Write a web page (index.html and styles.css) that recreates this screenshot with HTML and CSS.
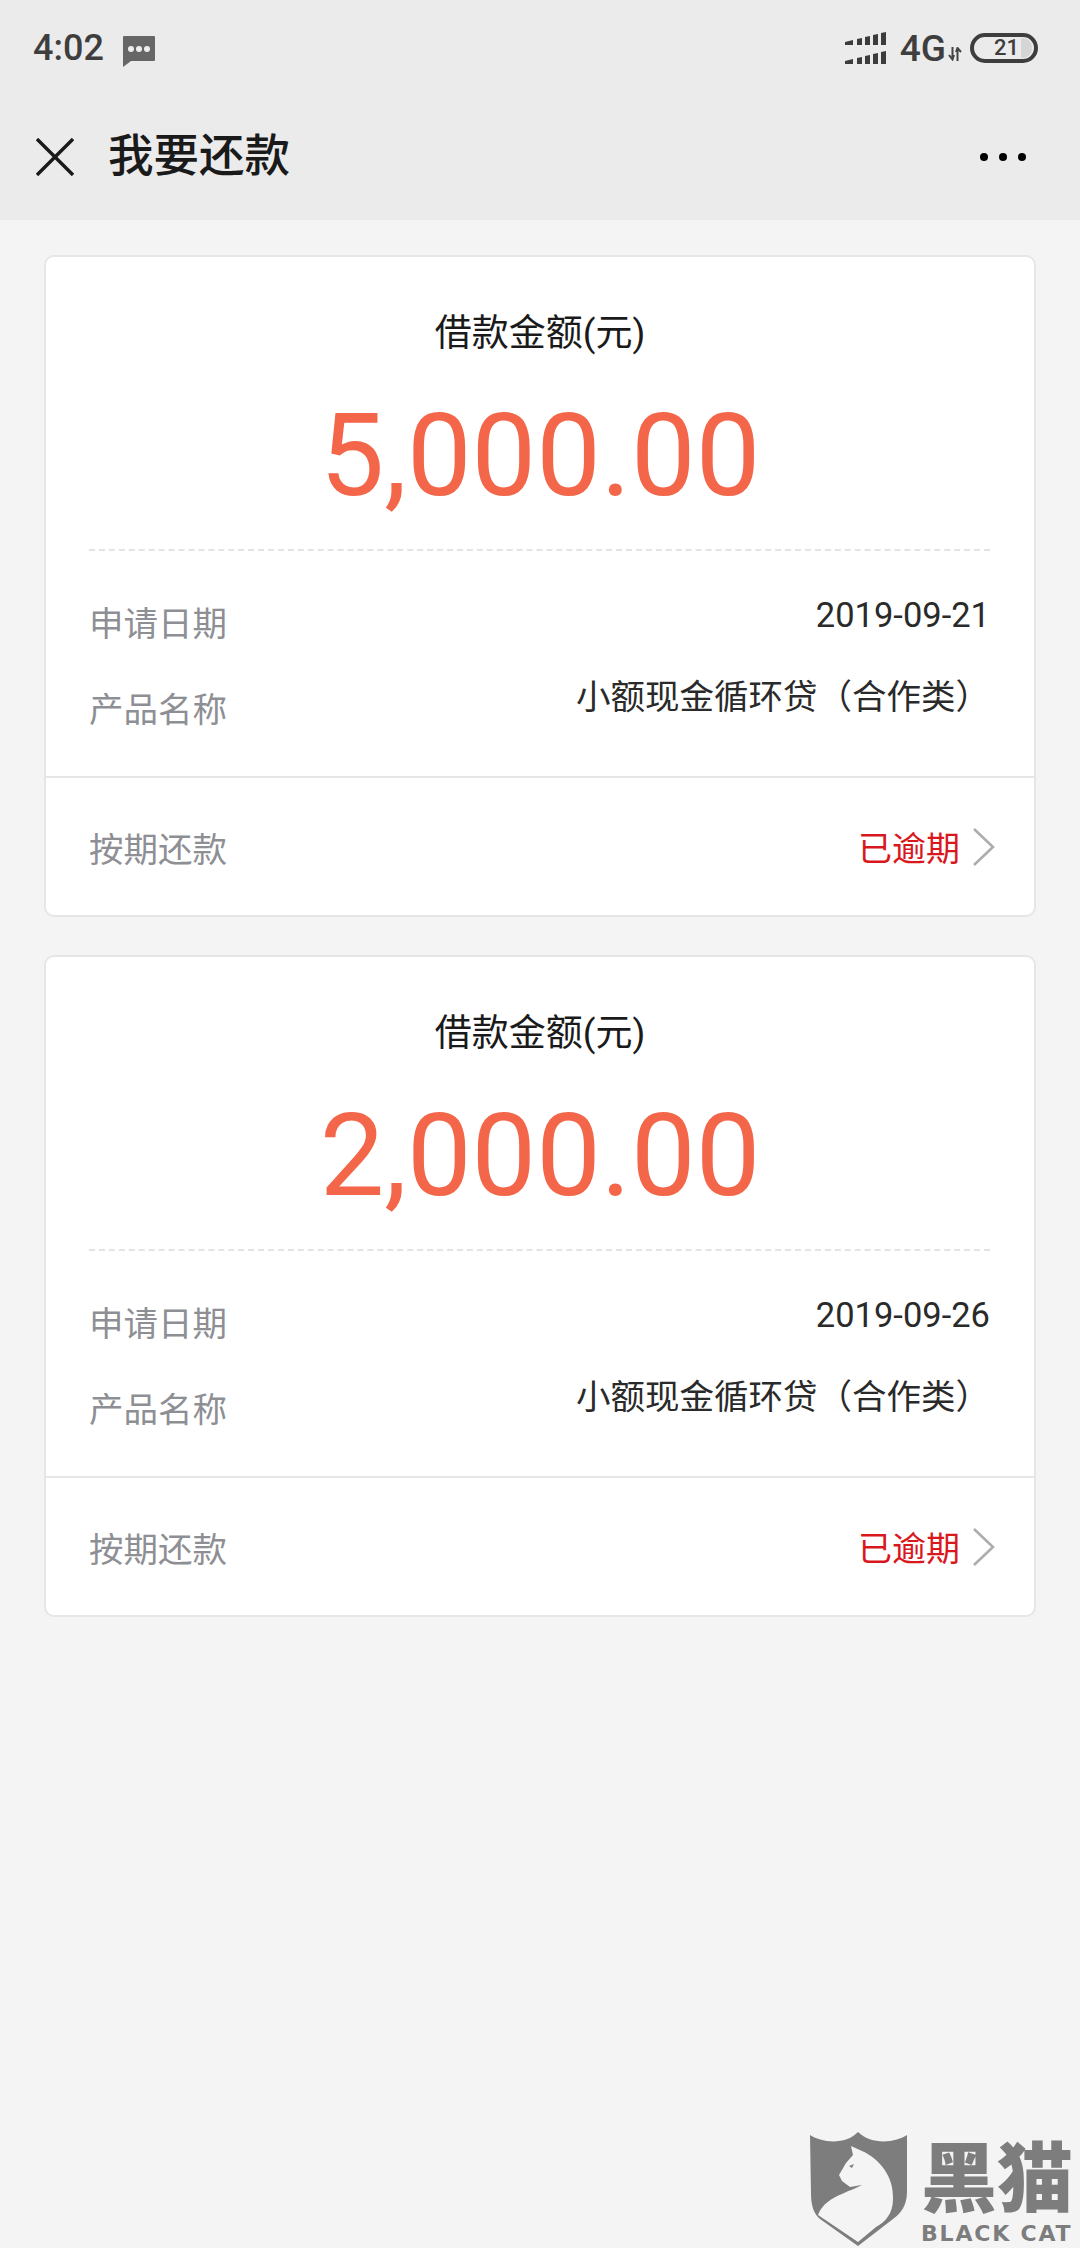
FILE: index.html
```html
<!DOCTYPE html>
<html lang="zh">
<head>
<meta charset="utf-8">
<title>我要还款</title>
<link rel="stylesheet" href="styles.css">
</head>
<body>
<div class="page">
  <header class="head">
    <div class="status">
      <div class="status-left">
        <span class="time">4:02</span>
        <svg class="msg" width="34" height="32" viewBox="0 0 34 32"><path d="M1 2a1 1 0 0 1 1-1h30a1 1 0 0 1 1 1v23a1 1 0 0 1-1 1H9l-8 6z" fill="#666"/><circle cx="9" cy="14" r="3" fill="#eee"/><circle cx="17" cy="14" r="3" fill="#eee"/><circle cx="25" cy="14" r="3" fill="#eee"/></svg>
      </div>
      <div class="status-right">
        <svg class="signal" width="42" height="32" viewBox="0 0 42 32"><g fill="#3c3c3c"><path d="M0 10l8-2v5H0zM12 7l5-1v7h-5zM20 5l5-1v9h-5zM28 3l5-1v11h-5zM36 1l5-1v13h-5z"/><path d="M0 29l8-2v5H0zM12 26l5-1v7h-5zM20 24l5-1v9h-5zM28 22l5-1v11h-5zM36 20l5-1v13h-5z"/></g></svg>
        <span class="net">4G</span>
        <svg class="updown" width="14" height="14" viewBox="0 0 14 14"><path d="M4.500 0v10M1 8l3.500 4.500L6 8M9.500 14V3M8 5l1.500-4L13 5" fill="none" stroke="#444" stroke-width="2"/></svg>
        <span class="battery"><span class="batt-num">21</span><span class="batt-fill"></span></span>
      </div>
    </div>
    <nav class="nav">
      <div class="nav-left">
        <svg class="close" width="38" height="38" viewBox="0 0 38 38"><path d="M1 1l36 36M37 1L1 37" fill="none" stroke="#1a1a1a" stroke-width="3.400"/></svg>
        <h1 class="title">我要还款</h1>
      </div>
      <div class="more"><i class="dot"></i><i class="dot"></i><i class="dot"></i></div>
    </nav>
  </header>

  <main class="list">
    <section class="card">
      <div class="summary">
        <div class="caption">借款金额(元)</div>
        <div class="amount">5,000.00</div>
      </div>
      <div class="details">
        <div class="row">
          <span class="label">申请日期</span>
          <span class="value value-date">2019-09-21</span>
        </div>
        <div class="row">
          <span class="label">产品名称</span>
          <span class="value value-name">小额现金循环贷（合作类）</span>
        </div>
      </div>
      <div class="foot">
        <span class="label label-foot">按期还款</span>
        <span class="state">已逾期
          <svg class="chev" width="24" height="40" viewBox="0 0 24 40"><path d="M2 2l19 18L2 38" fill="none" stroke="#adadad" stroke-width="2.600"/></svg>
        </span>
      </div>
    </section>

    <section class="card">
      <div class="summary">
        <div class="caption">借款金额(元)</div>
        <div class="amount">2,000.00</div>
      </div>
      <div class="details">
        <div class="row">
          <span class="label">申请日期</span>
          <span class="value value-date">2019-09-26</span>
        </div>
        <div class="row">
          <span class="label">产品名称</span>
          <span class="value value-name">小额现金循环贷（合作类）</span>
        </div>
      </div>
      <div class="foot">
        <span class="label label-foot">按期还款</span>
        <span class="state">已逾期
          <svg class="chev" width="24" height="40" viewBox="0 0 24 40"><path d="M2 2l19 18L2 38" fill="none" stroke="#adadad" stroke-width="2.600"/></svg>
        </span>
      </div>
    </section>
  </main>

  <div class="mark">
    <svg class="shield" width="98" height="115" viewBox="0 0 98 115">
      <path d="M0 3C10 10 35 14 48 0 62 14 87 10 97 3V60C97 74 90 82 83 87L48 114 10 87C4 82 1 74 1 62z" fill="#7d7d7d"/>
      <path d="M41 14L52 19C70 27 84 45 83 67 83 82 75 90 66 95L48 110 8 83C12 72 22 66 32 62 40 58 47 56 52 53L40 55 32 49 29 43 36 31 43 23z" fill="#f4f4f4"/>
      <path d="M39 34l5-2-2 4z" fill="#7d7d7d"/>
    </svg>
    <div class="mark-text">
      <div class="mark-cn">黑猫</div>
      <div class="mark-en">BLACK CAT</div>
    </div>
  </div>
</div>
</body>
</html>
```

FILE: styles.css
```css
* { box-sizing: border-box; }
html, body { margin: 0; padding: 0; }
body {
  font-family: Roboto, "Noto Sans CJK SC", sans-serif;
  background: #f4f4f5;
  color: #1a1a1a;
}
.page {
  position: relative;
  width: 1080px;
  height: 2248px;
  overflow: hidden;
}

/* header */
.head { background: #ebebeb; height: 220px; }
.status {
  height: 96px;
  padding: 0 42px 0 33px;
  display: flex;
  justify-content: space-between;
  align-items: center;
}
.status-left { display: flex; align-items: center; gap: 18px; }
.time { font-size: 36px; font-weight: 500; color: #3e3e3e; line-height: 1; }
.msg { margin-top: 6px; }
.status-right { display: flex; align-items: center; }
.signal { margin-right: 13px; }
.net { font-size: 37px; font-weight: 500; color: #3e3e3e; line-height: 1; }
.updown { margin: 12px 8px 0 2px; }
.battery {
  width: 68px;
  height: 30px;
  border: 4px solid #3e3e3e;
  border-radius: 15px;
  display: flex;
  align-items: center;
  justify-content: flex-end;
  padding-right: 2px;
  gap: 2px;
}
.batt-num { font-size: 22px; font-weight: 500; color: #3e3e3e; line-height: 1; }
.batt-fill { width: 11px; height: 20px; background: #d6d6d6; border-radius: 0 9px 9px 0; }
.nav {
  height: 124px;
  padding: 0 36px 2px 36px;
  display: flex;
  justify-content: space-between;
  align-items: center;
}
.nav-left { display: flex; align-items: center; gap: 34px; }
.close { display: block; }
.title { margin: 0; font-size: 45.500px; font-weight: 500; line-height: 1; color: #1a1a1a; }
.more { display: flex; gap: 11px; padding-right: 18px; }
.dot { width: 8px; height: 8px; border-radius: 50%; background: #000; display: block; }

/* cards */
.list {
  padding: 35px 44px 0;
  display: flex;
  flex-direction: column;
  gap: 38px;
}
.card {
  height: 662px;
  background: #fff;
  border: 2px solid #e6e6e6;
  border-radius: 10px;
  display: flex;
  flex-direction: column;
}
.summary { height: 292px; padding-top: 52px; text-align: center; }
.caption { font-size: 37px; line-height: 50px; }
.amount {
  font-size: 115px;
  line-height: 130px;
  margin-top: 32px;
  color: #f4664a;
}
.details {
  height: 227px;
  margin: 0 44px 0 43px;
  padding-top: 46px;
  border-top: 2px dashed #e4e4e4;
  display: flex;
  flex-direction: column;
  gap: 36px;
}
.row { height: 50px; display: flex; justify-content: space-between; align-items: center; }
.label { font-size: 34.500px; line-height: 50px; color: #8e8f94; margin-top: 3px; }
.label-foot { margin-top: 6px; }
.value { font-size: 34.500px; line-height: 50px; color: #2a2a2a; }
.value-date { margin-bottom: 14px; }
.value-name { margin-bottom: 22px; }
.foot {
  flex: 1;
  border-top: 2px solid #e6e6e6;
  padding: 0 38px 0 43px;
  display: flex;
  justify-content: space-between;
  align-items: center;
}
.state {
  display: flex;
  align-items: center;
  gap: 12px;
  font-size: 34px;
  color: #d9181e;
}
.chev { display: block; }

/* watermark */
.mark {
  position: absolute;
  left: 810px;
  top: 2132px;
  display: flex;
  gap: 13px;
}
.mark-text { width: 156px; padding-top: 9px; }
.mark-cn {
  font-size: 76px;
  line-height: 78px;
  font-weight: 900;
  color: #7d7d7d;
  white-space: nowrap;
}
.mark-en {
  font-family: "DejaVu Sans", sans-serif;
  font-weight: 700;
  font-size: 22px;
  line-height: 24px;
  margin-top: 3px;
  letter-spacing: 1.800px;
  color: #7d7d7d;
  white-space: nowrap;
}
```
